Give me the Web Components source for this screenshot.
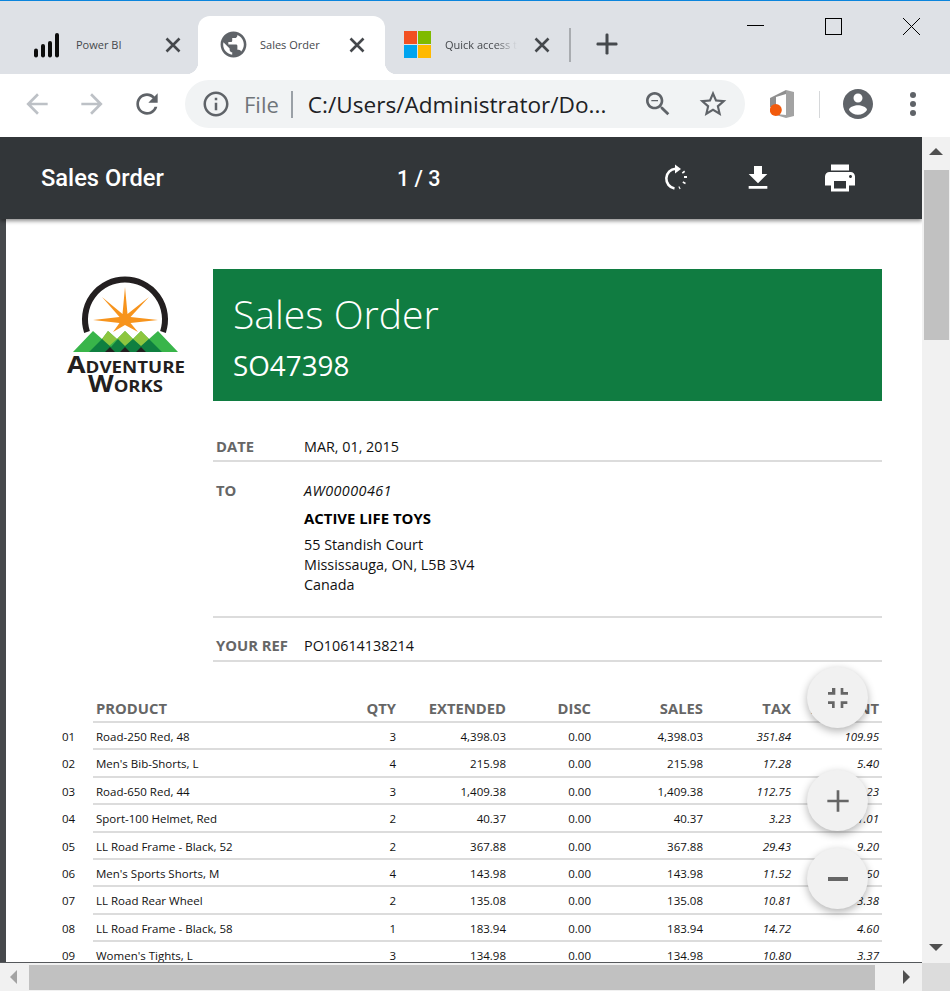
<!DOCTYPE html>
<html>
<head>
<meta charset="utf-8">
<title>Sales Order</title>
<style>
html,body{margin:0;padding:0;height:100%;overflow:hidden;background:#fff;}
</style>
</head>
<body>
<browser-window>
  <tab-strip slot="strip">
    <browser-tab label="Power BI" icon="bars" style="--w:186px;--pl:19px;--gap:13px;--pr:15px"></browser-tab>
    <browser-tab label="Sales Order" icon="globe" active style="--w:187px;--pl:19px;--gap:11px;--pr:18px"></browser-tab>
    <browser-tab label="Quick access to your files" icon="ms" fade style="--w:180px;--pl:16.5px;--gap:11.5px;--pr:13px"></browser-tab>
  </tab-strip>
  <omni-bar slot="bar"></omni-bar>
  <pdf-viewer slot="viewer">
    <order-head></order-head>
    <order-info></order-info>
    <order-table></order-table>
  </pdf-viewer>
</browser-window>

<script>
const ICON = {
  back:'M20 11H7.83l5.59-5.59L12 4l-8 8 8 8 1.41-1.41L7.83 13H20v-2z',
  forward:'M12 4l-1.41 1.41L16.17 11H4v2h12.17l-5.58 5.59L12 20l8-8z',
  reload:'M17.65 6.35C16.2 4.9 14.21 4 12 4c-4.42 0-7.99 3.58-7.99 8s3.57 8 7.99 8c3.73 0 6.84-2.55 7.73-6h-2.08c-.82 2.33-3.04 4-5.65 4-3.31 0-6-2.69-6-6s2.69-6 6-6c1.66 0 3.14.69 4.22 1.78L13 11h7V4l-2.35 2.35z',
  info:'M11 7h2v2h-2zm0 4h2v6h-2zm1-9C6.48 2 2 6.48 2 12s4.48 10 10 10 10-4.48 10-10S17.52 2 12 2zm0 18c-4.41 0-8-3.59-8-8s3.59-8 8-8 8 3.59 8 8-3.59 8-8 8z',
  zoomout:'M15.5 14h-.79l-.28-.27C15.41 12.59 16 11.11 16 9.5 16 5.91 13.09 3 9.5 3S3 5.91 3 9.5 5.91 16 9.5 16c1.61 0 3.09-.59 4.23-1.57l.27.28v.79l5 4.99L20.49 19l-4.99-5zm-6 0C7.01 14 5 11.99 5 9.5S7.01 5 9.5 5 14 7.01 14 9.5 11.99 14 9.5 14zM7 9h5v1H7z',
  star:'M22 9.24l-7.19-.62L12 2 9.19 8.63 2 9.24l5.46 4.73L5.82 21 12 17.27 18.18 21l-1.63-7.03L22 9.24zM12 15.4l-3.76 2.27 1-4.28-3.32-2.88 4.38-.38L12 6.1l1.71 4.04 4.38.38-3.32 2.88 1 4.28L12 15.4z',
  account:'M12 2C6.48 2 2 6.48 2 12s4.48 10 10 10 10-4.48 10-10S17.52 2 12 2zm0 3c1.66 0 3 1.34 3 3s-1.34 3-3 3-3-1.34-3-3 1.34-3 3-3zm0 14.2c-2.5 0-4.71-1.28-6-3.22.03-1.99 4-3.08 6-3.08 1.99 0 5.97 1.09 6 3.08-1.29 1.94-3.5 3.22-6 3.22z',
  globe:'M12 2C6.48 2 2 6.48 2 12s4.48 10 10 10 10-4.48 10-10S17.52 2 12 2zm-1 17.93c-3.95-.49-7-3.85-7-7.93 0-.62.08-1.21.21-1.79L9 15v1c0 1.1.9 2 2 2v1.93zm6.9-2.54c-.26-.81-1-1.39-1.9-1.39h-1v-3c0-.55-.45-1-1-1H8v-2h2c.55 0 1-.45 1-1V7h2c1.1 0 2-.9 2-2v-.41c2.93 1.19 5 4.06 5 7.41 0 2.08-.8 3.97-2.1 5.39z',
  download:'M19 9h-4V3H9v6H5l7 7 7-7zM5 18v2h14v-2H5z',
  print:'M19 8H5c-1.66 0-3 1.34-3 3v6h4v4h12v-4h4v-6c0-1.66-1.34-3-3-3zm-3 11H8v-5h8v5zm3-7c-.55 0-1-.45-1-1s.45-1 1-1 1 .45 1 1-.45 1-1 1zm-1-9H6v4h12V3z',
  shrink:'M4.500 16.500h3v3h2v-5H4.500v2zm3-9h-3v2H10v-5H7.500v3zm6.500 12h2v-3h3v-2H14v5zm2-12v-3H14v5h5.500v-2H16z',
  plus:'M20 13h-7v7h-2v-7H4v-2h7V4h2v7h7v2z',
  minus:'M19.500 13.500h-15v-3h15z'
}
function svg(name,size,fill){
  return `<svg width="${size}" height="${size}" viewBox="0 0 24 24" fill="${fill}"><path d="${ICON[name]}"/></svg>`
}

window.customElements.define('browser-window',
class extends HTMLElement {
  constructor(){super();
    this.attachShadow({mode:'open'})
    this.shadowRoot.innerHTML = `
    <style>
    :host{display:flex;flex-direction:column;width:950px;height:991px;overflow:hidden;}
    </style>
    <slot name="strip"></slot>
    <slot name="bar"></slot>
    <slot name="viewer"></slot>
    `
  }
})

window.customElements.define('tab-strip',
class extends HTMLElement {
  constructor(){super();
    this.attachShadow({mode:'open'})
    this.shadowRoot.innerHTML = `
    <style>
    :host{display:flex;flex:none;box-sizing:border-box;height:74px;background:#dee1e6;border-top:1px solid #0a84dc;padding:15px 0 0 12px;color:#3c4043;}
    .tabs{display:flex;}
    .sep{width:2px;height:34px;background:#a9acb0;margin:12px 0 0 4px;}
    .plus{margin:12px 0 0 20px;width:32px;height:32px;}
    .win{margin-left:auto;display:flex;margin-top:-15px;margin-right:29px;}
    .win svg{display:block;}
    .win span{display:block;width:20px;height:20px;margin-top:15px;}
    .win span+span{margin-left:58px;}
    </style>
    <div class="tabs"><slot></slot></div>
    <div class="sep"></div>
    <div class="plus"><svg width="32" height="32" viewBox="0 0 32 32" fill="#45494d"><rect x="5.500" y="14.500" width="21" height="3" rx="1.200"/><rect x="14.500" y="5.500" width="3" height="21" rx="1.200"/></svg></div>
    <div class="win">
      <span><svg width="20" height="20" stroke="#000" fill="none"><path d="M2 9.500h17"/></svg></span>
      <span><svg width="20" height="20" stroke="#000" fill="none"><rect x="2.500" y="2.500" width="16" height="16"/></svg></span>
      <span><svg width="20" height="20" stroke="#000" fill="none"><path d="M2 2l17 17M19 2L2 19"/></svg></span>
    </div>
    `
  }
})

window.customElements.define('browser-tab',
class extends HTMLElement {
  icon(){
    let name = this.getAttribute('icon')
    if(name=='bars') return `<svg width="28" height="28" viewBox="0 0 28 28" fill="#0c0c0c"><rect x="1" y="17.500" width="4" height="9" rx="2"/><rect x="8" y="13" width="4" height="13.500" rx="2"/><rect x="15" y="10" width="4" height="16.500" rx="2"/><rect x="22" y="2" width="4" height="24.500" rx="2"/></svg>`
    if(name=='globe') return svg('globe',31,'#5f6368')
    return `<svg width="27" height="27" viewBox="0 0 27 27"><rect width="13" height="13" fill="#f25022"/><rect x="14" width="13" height="13" fill="#7fba00"/><rect y="14" width="13" height="13" fill="#00a4ef"/><rect x="14" y="14" width="13" height="13" fill="#ffb900"/></svg>`
  }
  constructor(){super();
    this.attachShadow({mode:'open'})
  }
  connectedCallback(){
    this.shadowRoot.innerHTML = `
    <style>
    :host{display:block;position:relative;box-sizing:border-box;width:var(--w);height:58px;font:11px "Open Sans",sans-serif;color:#45484c;}
    :host([active]){background:#fff;border-radius:12px 12px 0 0;}
    :host([active])::before,:host([active])::after{content:"";position:absolute;bottom:0;width:12px;height:12px;}
    :host([active])::before{left:-12px;background:radial-gradient(circle at 0 0,transparent 12px,#fff 12.5px);}
    :host([active])::after{right:-12px;background:radial-gradient(circle at 100% 0,transparent 12px,#fff 12.5px);}
    .row{display:flex;align-items:center;box-sizing:border-box;height:57px;padding:0 var(--pr) 0 var(--pl);}
    .ic{flex:none;width:32px;height:32px;display:flex;align-items:center;justify-content:center;}
    .txt{flex:none;margin-left:var(--gap);padding-bottom:1px;white-space:nowrap;}
    :host([fade]) .txt{width:72px;overflow:hidden;-webkit-mask-image:linear-gradient(90deg,#000 70%,transparent);mask-image:linear-gradient(90deg,#000 70%,transparent);}
    .x{flex:none;display:flex;margin-left:auto;}
    </style>
    <div class="row">
      <div class="ic">${this.icon()}</div>
      <div class="txt">${this.getAttribute('label')}</div>
      <div class="x"><svg width="20" height="20" viewBox="0 0 20 20" stroke="#45484c" stroke-width="2.600" fill="none"><path d="M3.500 3.500l13 13M16.500 3.500l-13 13"/></svg></div>
    </div>
    `
  }
})

window.customElements.define('omni-bar',
class extends HTMLElement {
  constructor(){super();
    this.attachShadow({mode:'open'})
    this.shadowRoot.innerHTML = `
    <style>
    :host{display:flex;flex:none;align-items:center;box-sizing:border-box;height:63px;background:#fff;padding:0 0 3px 21px;font-family:"Open Sans",sans-serif;}
    svg{display:block;}
    .nav{display:flex;gap:23px;align-items:center;}
    .pill{display:flex;align-items:center;box-sizing:border-box;width:560px;height:48px;margin-left:22px;padding-left:16px;background:#f1f3f4;border-radius:24px;}
    .file{margin-left:13px;font-size:22px;color:#70757a;}
    .bar{width:2px;height:27px;background:#9aa0a6;margin:0 15px 0 12px;}
    .url{width:303px;white-space:nowrap;font-size:22.600px;color:#202124;}
    .end{display:flex;margin-left:auto;margin-right:16px;gap:23px;}
    .office{margin-left:25px;}
    .div{width:1px;height:27px;background:#d6d8da;margin-left:25px;}
    .acct{margin-left:20px;}
    .dots{margin-left:32px;}
    </style>
    <div class="nav">
      ${svg('back',32,'#bdc1c6')}
      ${svg('forward',32,'#bdc1c6')}
      ${svg('reload',32,'#5f6368')}
    </div>
    <div class="pill">
      ${svg('info',30,'#5f6368')}
      <span class="file">File</span>
      <span class="bar"></span>
      <span class="url">C:/Users/Administrator/Do...</span>
      <div class="end">${svg('zoomout',32,'#5f6368')}${svg('star',32,'#5f6368')}</div>
    </div>
    <svg class="office" width="24" height="28" viewBox="0 0 24 28">
      <path d="M0 8L16 0v4L6 7v10H0z" fill="#8f8f8f"/>
      <path d="M16 0l8 2v24l-8 2-10-3v-1l10 1z" fill="#a3a3a3"/>
      <circle cx="5.800" cy="20" r="6" fill="#f25a0c"/>
    </svg>
    <div class="div"></div>
    <div class="acct">${svg('account',36,'#5f6368')}</div>
    <svg class="dots" width="10" height="26" viewBox="0 0 10 26" fill="#5f6368"><circle cx="5" cy="4" r="3"/><circle cx="5" cy="13" r="3"/><circle cx="5" cy="22" r="3"/></svg>
    `
  }
})

window.customElements.define('pdf-viewer',
class extends HTMLElement {
  constructor(){super();
    this.attachShadow({mode:'open'})
    this.shadowRoot.innerHTML = `
    <style>
    :host{display:grid;flex:none;grid-template-columns:922px 28px;grid-template-rows:826px 28px;height:854px;font-family:"Open Sans",sans-serif;}
    .main{position:relative;overflow:hidden;background:#46494c;border-bottom:1px solid #55585b;box-sizing:border-box;}
    .top{display:flex;align-items:center;box-sizing:border-box;height:82px;background:#323639;color:#fff;padding-left:41px;font-family:Roboto,sans-serif;font-weight:500;box-shadow:0 2px 4px rgba(0,0,0,.45);position:relative;z-index:2;}
    .title{font-size:23.700px;width:356px;}
    .count{font-size:21.500px;}
    .tools{display:flex;margin-left:auto;margin-right:66px;gap:50px;}
    svg{display:block;}
    .page{margin-left:6px;background:#fff;box-sizing:border-box;padding:50px 40px 40px 47px;height:900px;}
    .vbar{display:flex;flex-direction:column;align-items:center;background:#f1f1f1;}
    .up{margin-top:11px;width:0;height:0;border:7px solid transparent;border-top:0;border-bottom:7px solid #505050;}
    .thumb{width:25px;height:170px;background:#c1c1c1;margin-top:15px;}
    .down{margin-top:auto;margin-bottom:12px;width:0;height:0;border:7px solid transparent;border-bottom:0;border-top:7px solid #505050;}
    .hbar{display:flex;align-items:center;background:#f1f1f1;}
    .left{margin-left:10px;width:0;height:0;border:7px solid transparent;border-left:0;border-right:7px solid #a3a3a3;}
    .hthumb{width:846px;height:25px;background:#c1c1c1;margin-left:12px;}
    .right{margin-left:28px;width:0;height:0;border:7px solid transparent;border-right:0;border-left:7px solid #505050;}
    .corner{background:#dcdcdc;}
    </style>
    <div class="main">
      <div class="top">
        <span class="title">Sales Order</span>
        <span class="count">1 / 3</span>
        <div class="tools">
          <svg width="32" height="32" viewBox="0 0 32 32" fill="none" stroke="#fff" stroke-width="2.600"><path d="M15.500 6.700A10 10 0 0 0 14.500 26.500"/><path d="M19 26 20 25.500M23.800 21.500 24.500 20M25.500 16V14M24 10.800 23 9.500" stroke-width="3"/><path d="M15 2.500l6 4.500-6 4.500z" fill="#fff" stroke="none"/></svg>
          ${svg('download',32,'#fff')}
          ${svg('print',36,'#fff').replace('<svg','<svg style="margin:-2px"')}
        </div>
      </div>
      <div class="page"><slot></slot></div>
      <fab-button icon="shrink" style="top:530px"></fab-button>
      <fab-button icon="plus" style="top:633px"></fab-button>
      <fab-button icon="minus" style="top:711px"></fab-button>
    </div>
    <div class="vbar"><div class="up"></div><div class="thumb"></div><div class="down"></div></div>
    <div class="hbar"><div class="left"></div><div class="hthumb"></div><div class="right"></div></div>
    <div class="corner"></div>
    `
  }
})

window.customElements.define('fab-button',
class extends HTMLElement {
  constructor(){super();
    this.attachShadow({mode:'open'})
  }
  connectedCallback(){
    this.shadowRoot.innerHTML = `
    <style>
    :host{position:absolute;left:807px;width:61px;height:61px;border-radius:50%;background:#f1f1f1;box-shadow:0 3px 8px rgba(0,0,0,.3);display:flex;align-items:center;justify-content:center;z-index:3;}
    svg{display:block;}
    </style>
    ${svg(this.getAttribute('icon'),32,'#666')}
    `
  }
})

window.customElements.define('order-head',
class extends HTMLElement {
  constructor(){super();
    this.attachShadow({mode:'open'})
    this.shadowRoot.innerHTML = `
    <style>
    :host{display:flex;margin-left:7px;}
    .logo{flex:none;width:153px;height:132px;}
    svg{display:block;}
    .band{flex:1;height:132px;box-sizing:border-box;background:#107c41;color:#fff;padding:18px 0 0 20px;}
    h1{margin:0;font-weight:300;font-size:39.100px;line-height:53px;}
    h2{margin:0;font-weight:400;font-size:27.800px;line-height:50px;}
    text{font-family:"Open Sans",sans-serif;font-weight:700;font-size:23px;font-variant:small-caps;fill:#231f20;}
    </style>
    <div class="logo">
      <svg width="153" height="132" viewBox="60 269 153 132">
        <path d="M87 332A40 40 0 1 1 163 332" fill="none" stroke="#231f20" stroke-width="6"/>
        <polygon points="125,287 127.500,314 149,297 130.500,317 158,320 130.500,323 138,332 125,325 113,332 119.500,323 93,320 119.500,317 102,297 122.500,314" fill="#f7941d"/>
        <polygon points="73,352 93,331 102,339 108,331 117,339 125,331 133,339 141,331 149,339 158,331 178,352" fill="#39b54a"/>
        <polygon points="102,339 108,331 117,339 125,331 133,339 141,331 149,339 141,347 133,339 125,347 117,339 108,347" fill="#8dc63f"/>
        <polygon points="89,352 102,339 111,347 118,339 125,346 133,339 141,346 149,339 162,352" fill="#0f7f40"/>
        <polygon points="105,352 110,347 115,352 120,352 125,347 130,352 136,352 141,347 146,352" fill="#231f20"/>
        <text x="67" y="373" textLength="118" lengthAdjust="spacingAndGlyphs">Adventure</text>
        <text x="88" y="392" textLength="75" lengthAdjust="spacingAndGlyphs">Works</text>
      </svg>
    </div>
    <div class="band">
      <h1>Sales Order</h1>
      <h2>SO47398</h2>
    </div>
    `
  }
})

window.customElements.define('order-info',
class extends HTMLElement {
  constructor(){super();
    this.attachShadow({mode:'open'})
    this.shadowRoot.innerHTML = `
    <style>
    :host{display:block;margin-left:160px;font-size:14.350px;color:#111;line-height:20px;}
    .row{display:flex;border-bottom:2px solid #dcdcdc;padding-left:3px;}
    .row b{flex:none;width:88px;margin-top:-1px;color:#666;font-weight:700;font-size:14.800px;}
    .date{margin-top:36px;padding-bottom:3px;}
    .to{margin-top:19px;padding-bottom:21px;}
    .ref{margin-top:18px;padding-bottom:4px;}
    p{margin:0;}
    .id{font-style:italic;letter-spacing:.45px;margin-bottom:7px;}
    .name{font-weight:700;font-size:14.900px;color:#000;margin-bottom:7px;}
    </style>
    <div class="row date"><b>DATE</b><div>MAR, 01, 2015</div></div>
    <div class="row to"><b>TO</b><div>
      <p class="id">AW00000461</p>
      <p class="name">ACTIVE LIFE TOYS</p>
      <p>55 Standish Court</p>
      <p>Mississauga, ON, L5B 3V4</p>
      <p>Canada</p>
    </div></div>
    <div class="row ref"><b>YOUR REF</b><div>PO10614138214</div></div>
    `
  }
})

window.customElements.define('order-table',
class Element extends HTMLElement {
  rows(){
    return [
      ["01","Road-250 Red, 48","3","4,398.03","0.00","4,398.03","351.84","109.95"],
      ["02","Men's Bib-Shorts, L","4","215.98","0.00","215.98","17.28","5.40"],
      ["03","Road-650 Red, 44","3","1,409.38","0.00","1,409.38","112.75","35.23"],
      ["04","Sport-100 Helmet, Red","2","40.37","0.00","40.37","3.23","1.01"],
      ["05","LL Road Frame - Black, 52","2","367.88","0.00","367.88","29.43","9.20"],
      ["06","Men's Sports Shorts, M","4","143.98","0.00","143.98","11.52","3.50"],
      ["07","LL Road Rear Wheel","2","135.08","0.00","135.08","10.81","3.38"],
      ["08","LL Road Frame - Black, 58","1","183.94","0.00","183.94","14.72","4.60"],
      ["09","Women's Tights, L","3","134.98","0.00","134.98","10.80","3.37"]
    ]
  }
  row(r){
    return `<div class="row">
      <span class="n">${r[0]}</span>
      <span class="c">${r[1]}</span>
      <span class="c r">${r[2]}</span>
      <span class="c r">${r[3]}</span>
      <span class="c r">${r[4]}</span>
      <span class="c r">${r[5]}</span>
      <span class="c r i">${r[6]}</span>
      <span class="c r i">${r[7]}</span>
    </div>`
  }
  constructor(){super();
    this.attachShadow({mode:'open'})
    this.shadowRoot.innerHTML = `
    <style>
    :host{display:block;margin:36px 0 0 9px;font-size:11.500px;color:#111;}
    .row{display:grid;grid-template-columns:31px 240px 66px 110px 85px 112px 88px 88px;height:27.375px;}
    .n{padding-top:6px;}
    .c{box-sizing:border-box;border-bottom:2px solid #dcdcdc;padding:6px 3px 0;white-space:nowrap;}
    .r{text-align:right;}
    .i{font-style:italic;}
    .head{font-weight:700;font-size:14.800px;color:#666;height:25px;}
    .head .c{padding-top:0;}
    </style>
    <div class="row head"><span></span><span class="c">PRODUCT</span><span class="c r">QTY</span><span class="c r">EXTENDED</span><span class="c r">DISC</span><span class="c r">SALES</span><span class="c r">TAX</span><span class="c r">AMOUNT</span></div>
    ${this.rows().map(r=>this.row(r)).join('')}
    `
  }
})
</script>
</body>
</html>
